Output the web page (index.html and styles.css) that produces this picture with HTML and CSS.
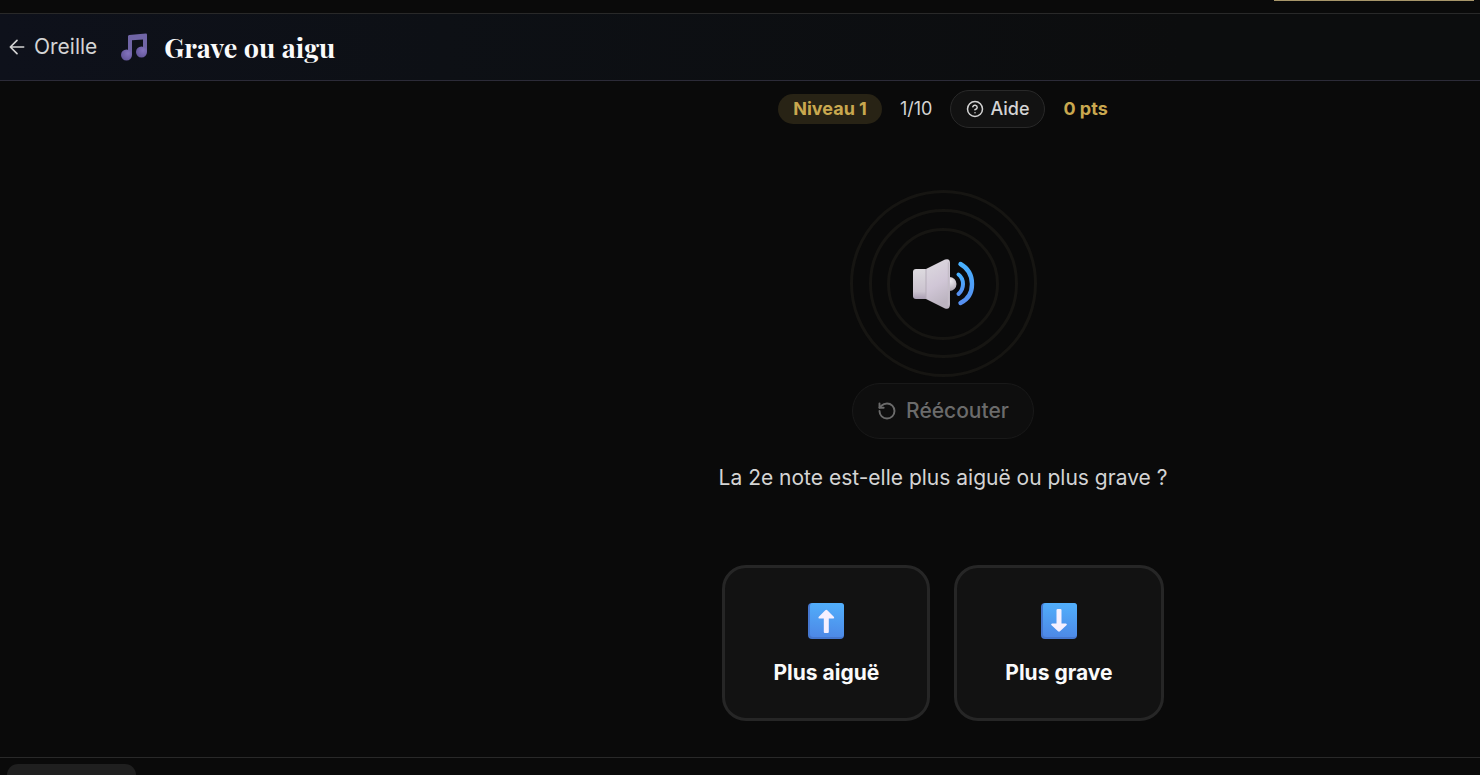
FILE: index.html
```html
<!DOCTYPE html>
<html lang="fr">
<head>
    <meta charset="UTF-8">
    <meta name="viewport" content="width=device-width, initial-scale=1.0">
    <title>Grave ou aigu</title>
    <link rel="stylesheet" href="styles.css">
</head>
<body>
    <div class="topbar">
        <div class="topbar-accent"></div>
    </div>

    <header class="header">
        <a class="back" href="#">
            <svg width="20" height="20" viewBox="0 0 24 24" fill="none" stroke="currentColor" stroke-width="2" stroke-linecap="round" stroke-linejoin="round" aria-hidden="true">
                <path d="M12 20l-8-8 8-8M20 12H4"/>
            </svg>
            Oreille
        </a>
        <svg class="note" width="28" height="28" viewBox="0 0 28 28" aria-hidden="true">
            <defs>
                <radialGradient id="head" cx="0.65" cy="0.35" r="0.7">
                    <stop offset="0" stop-color="#8373bd"/>
                    <stop offset="1" stop-color="#63569a"/>
                </radialGradient>
            </defs>
            <path d="M8 3.200Q8 2 9.200 1.900L25.800.6Q27 .5 27 1.700V19H23V6.400L12 7.300V22H8Z" fill="#7065a6"/>
            <circle cx="6.500" cy="22" r="5.500" fill="url(#head)"/>
            <circle cx="21.500" cy="19" r="5.500" fill="url(#head)"/>
        </svg>
        <h1>Grave ou aigu</h1>
    </header>

    <main class="exercise">
        <div class="status">
            <span class="level">Niveau 1</span>
            <span class="progress">1/10</span>
            <button class="help" type="button">
                <svg width="18" height="18" viewBox="0 0 24 24" fill="none" stroke="currentColor" stroke-width="2" stroke-linecap="round" stroke-linejoin="round" aria-hidden="true">
                    <circle cx="12" cy="12" r="10"/>
                    <path d="M9.090 9a3 3 0 0 1 5.830 1c0 2-3 3-3 3M12 17h.01"/>
                </svg>
                Aide
            </button>
            <span class="points">0 pts</span>
        </div>

        <div class="rings">
            <div class="ring ring-large"></div>
            <div class="ring ring-medium"></div>
            <div class="ring ring-small"></div>
            <svg class="speaker" width="64" height="52" viewBox="-1 0 64 52" aria-hidden="true">
                <defs>
                    <linearGradient id="cone" x1="0" y1="0" x2="0.3" y2="1">
                        <stop offset="0" stop-color="#dedbe0"/>
                        <stop offset="0.6" stop-color="#d0c6d6"/>
                        <stop offset="1" stop-color="#bcb4c0"/>
                    </linearGradient>
                    <linearGradient id="box" x1="0" y1="0" x2="0" y2="1">
                        <stop offset="0" stop-color="#dddadf"/>
                        <stop offset="0.75" stop-color="#cbc3cf"/>
                        <stop offset="1" stop-color="#a99db2"/>
                    </linearGradient>
                    <radialGradient id="dome" cx="0.55" cy="0.3" r="0.75">
                        <stop offset="0" stop-color="#efedf0"/>
                        <stop offset="1" stop-color="#aaa2ac"/>
                    </radialGradient>
                    <linearGradient id="wave" x1="0" y1="0" x2="0" y2="1">
                        <stop offset="0" stop-color="#48b1ff"/>
                        <stop offset="1" stop-color="#568ff0"/>
                    </linearGradient>
                </defs>
                <circle cx="37.500" cy="26" r="7" fill="url(#dome)"/>
                <path d="M4 11H14V41H4Q1 41 1 38V14Q1 11 4 11Z" fill="url(#box)"/>
                <path d="M14 11L33 1.600Q38 0 38 5V46Q38 52 33 50.400L14 41Z" fill="url(#cone)"/>
                <path d="M14 11V41" stroke="#b5acb9" stroke-width="1"/>
                <path d="M36.500 5V47" stroke="#c4bdc7" stroke-width="1.500" stroke-linecap="round"/>
                <path d="M46.500 16.500Q51 20 51 26T46.500 36" fill="none" stroke="url(#wave)" stroke-width="4" stroke-linecap="round"/>
                <path d="M48.500 6Q60 12.500 60 26T48.500 45" fill="none" stroke="url(#wave)" stroke-width="4.400" stroke-linecap="round"/>
            </svg>
        </div>

        <button class="replay" type="button" disabled>
            <svg width="20" height="20" viewBox="0 0 24 24" fill="none" stroke="currentColor" stroke-width="2.300" stroke-linecap="round" stroke-linejoin="round" aria-hidden="true">
                <path d="M3 12a9 9 0 1 0 9-9 9.750 9.750 0 0 0-6.740 2.740L3 8"/>
                <path d="M3 3v5h5"/>
            </svg>
            Réécouter
        </button>

        <p class="question">La 2e note est-elle plus aiguë ou plus grave ?</p>

        <div class="answers">
            <button class="answer" type="button">
                <svg width="36" height="36" viewBox="0 0 36 36" aria-hidden="true">
                    <defs>
                        <linearGradient id="tile" x1="0.3" y1="0" x2="0.2" y2="1">
                            <stop offset="0" stop-color="#51aefb"/>
                            <stop offset="1" stop-color="#4d88e6"/>
                        </linearGradient>
                    </defs>
                    <rect width="36" height="36" rx="4" fill="#4577cf"/>
                    <rect x="2" width="34" height="34" rx="3" fill="url(#tile)"/>
                    <path d="M17.300 7.300Q18.300 6.300 19.300 7.300L26 14Q26.800 15.600 25 15.600H20.800V29Q20.800 30 19.800 30H16.800Q15.800 30 15.800 29V15.600H11.600Q9.800 15.600 10.600 14Z" fill="#f6f0ff"/>
                </svg>
                <span>Plus aiguë</span>
            </button>
            <button class="answer" type="button">
                <svg width="36" height="36" viewBox="0 0 36 36" aria-hidden="true">
                    <rect width="36" height="36" rx="4" fill="#4577cf"/>
                    <rect x="2" width="34" height="34" rx="3" fill="url(#tile)"/>
                    <path d="M16.800 6H19.500Q20.500 6 20.500 7V20.400H24.700Q26.500 20.400 25.700 22L19 28.300Q18 29.200 17 28.300L10.300 22Q9.500 20.400 11.300 20.400H15.500V7Q15.500 6 16.800 6Z" fill="#f6f0ff"/>
                </svg>
                <span>Plus grave</span>
            </button>
        </div>
    </main>

    <footer class="footer">
        <div class="footer-tab"></div>
    </footer>
</body>
</html>
```
FILE: styles.css
```css
* {
    box-sizing: border-box;
}

body {
    margin: 0;
    min-height: 100vh;
    display: flex;
    flex-direction: column;
    overflow: hidden;
    background-color: #0a0a0a;
    color: #d4d4d4;
    font-family: Inter, sans-serif;
}

button {
    font-family: inherit;
    cursor: pointer;
}

.topbar {
    height: 14px;
    padding-right: 6px;
    border-bottom: 1px solid #292929;
}

.topbar-accent {
    width: 200px;
    height: 1px;
    margin-left: auto;
    background-color: #a8966a;
}

.header {
    display: flex;
    align-items: center;
    height: 67px;
    padding: 0 7px;
    background: linear-gradient(90deg, #0e111b, #0d1015 30%, #0c0d0e 80%);
    border-bottom: 1px solid #2c2b38;
}

.back {
    display: flex;
    align-items: center;
    gap: 7px;
    color: #d4d4d4;
    font-size: 21px;
    line-height: 24px;
    text-decoration: none;
}

.note {
    margin: 0 16px 0 23px;
}

h1 {
    margin: 0;
    color: #fafafa;
    font-family: "Playfair Display", "Liberation Serif", serif;
    font-size: 27px;
    font-weight: 700;
}

.exercise {
    flex: 1;
    display: flex;
    flex-direction: column;
    align-items: center;
    padding: 9px 0 36px 406px;
}

.status {
    display: flex;
    align-items: center;
    gap: 18px;
    font-size: 18px;
    line-height: 22px;
}

.level {
    padding: 4px 15px;
    border-radius: 15px;
    background-color: #282315;
    color: #c9a84f;
    font-weight: 700;
}

.help {
    display: flex;
    align-items: center;
    gap: 6px;
    height: 38px;
    padding: 0 15px;
    border: 1px solid #292929;
    border-radius: 19px;
    background-color: #121212;
    color: #d4d4d4;
    font-size: 18px;
    font-weight: 500;
    line-height: 22px;
}

.points {
    color: #c9a84f;
    font-weight: 700;
}

.rings {
    display: grid;
    place-items: center;
    margin-top: 62px;
}

.ring,
.speaker {
    grid-area: 1 / 1;
}

.ring {
    border: 3px solid #161512;
    border-radius: 50%;
}

.ring-large {
    width: 187px;
    height: 187px;
}

.ring-medium {
    width: 149px;
    height: 149px;
}

.ring-small {
    width: 112px;
    height: 112px;
}

.replay {
    display: flex;
    align-items: center;
    gap: 9px;
    height: 56px;
    margin-top: 6px;
    padding: 0 24px;
    border: 1px solid #191919;
    border-radius: 28px;
    background-color: #0e0e0e;
    color: #6b6b6b;
    font-size: 21px;
    font-weight: 500;
    line-height: 26px;
}

.question {
    margin: 24px 0 0;
    font-size: 21px;
    line-height: 30px;
}

.answers {
    display: flex;
    gap: 24px;
    margin-top: 72px;
}

.answer {
    display: flex;
    flex-direction: column;
    align-items: center;
    gap: 19px;
    padding: 35px 48px 30px;
    border: 3px solid #262626;
    border-radius: 24px;
    background-color: #121212;
    color: #fafafa;
    font-size: 21px;
    font-weight: 700;
    line-height: 30px;
}

.footer {
    height: 18px;
    padding: 6px 7px 0;
    border-top: 1px solid #292929;
}

.footer-tab {
    width: 129px;
    height: 11px;
    border-radius: 12px 12px 0 0;
    background-color: #1f1f1f;
}
```
